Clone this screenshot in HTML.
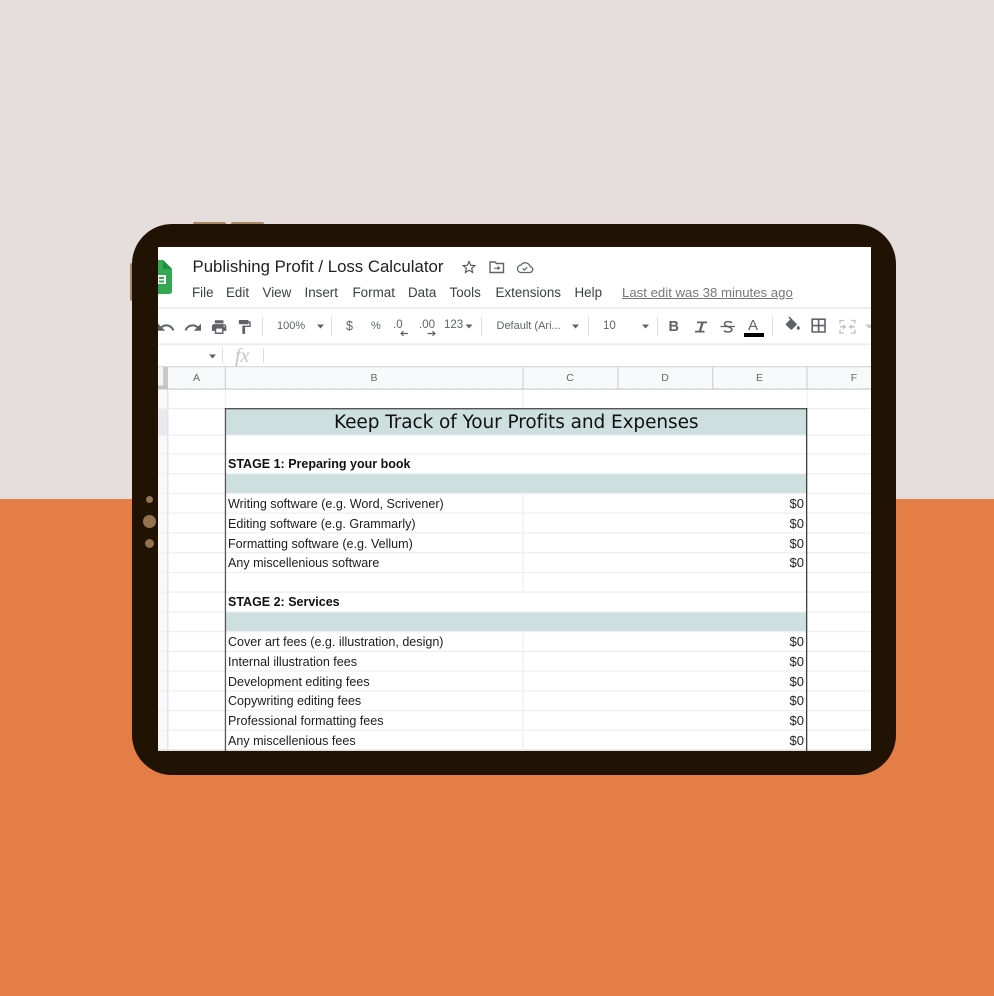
<!DOCTYPE html>
<html><head><meta charset="utf-8"><style>
html,body{margin:0;padding:0;width:994px;height:996px;overflow:hidden;background:#e6dedc}
*{box-sizing:border-box}
.a{position:absolute}
.t{position:absolute;white-space:nowrap;font-family:"Liberation Sans",sans-serif;line-height:1}
.m{font-size:13.4px;color:#3c4043;top:286px}
.tb{font-size:11px;color:#5f6368;top:321px}
.h{font-size:10.5px;color:#666;top:373px;text-align:center}
.c{font-size:12.55px;color:#1c1c1c;left:70px;margin-top:1px}
.b{font-weight:bold;color:#111;font-size:12.5px;margin-top:0}
.v{font-size:13px;color:#222;right:67px}
.sep{position:absolute;top:317px;width:1px;height:19px;background:#ddd}
</style></head><body>
<div class="a" style="left:0;top:499px;width:994px;height:497px;background:#e57d46"></div>
<div class="a" style="left:193px;top:222px;width:33px;height:4px;background:#a98868;border-radius:2px"></div>
<div class="a" style="left:231px;top:222px;width:33px;height:4px;background:#a98868;border-radius:2px"></div>
<div class="a" style="left:130px;top:263px;width:4px;height:38px;background:#a98868;border-radius:2px"></div>
<div class="a" style="left:132px;top:224px;width:764px;height:551px;background:#201303;border-radius:40px"></div>
<div class="a" style="left:145.5px;top:495.5px;width:7px;height:7px;border-radius:50%;background:#94724f"></div>
<div class="a" style="left:143px;top:514.5px;width:13px;height:13px;border-radius:50%;background:#94724f"></div>
<div class="a" style="left:145px;top:538.5px;width:9px;height:9px;border-radius:50%;background:#94724f"></div>

<div class="a" id="s" style="left:158px;top:247px;width:713px;height:504px;background:#fff;overflow:hidden;filter:blur(.35px)">
<div style="position:absolute;left:-158px;top:-247px;width:994px;height:996px">

<svg class="a" style="left:0;top:0" width="994" height="996" viewBox="0 0 994 996">
<!-- sheets logo -->
<path d="M158 260H163L172 269V291Q172 294 169 294H158Z" fill="#34a853"/><path d="M163 260L172 269H163Z" fill="#1e8e3e"/>
<path d="M158 275H166V284H158Z" fill="#fff"/><path d="M159 277H164V279H159ZM159 280.500H164V282.500H159Z" fill="#34a853"/>
<!-- title icons -->
<path transform="translate(460.400 258.500) scale(.72)" d="M22 9.240l-7.190-.62L12 2 9.190 8.630 2 9.240l5.460 4.730L5.820 21 12 17.270 18.180 21l-1.630-7.030L22 9.240zM12 15.400l-3.760 2.270 1-4.280-3.320-2.880 4.380-.38L12 6.100l1.710 4.040 4.380.38-3.320 2.880 1 4.280L12 15.400z" fill="#555"/>
<path d="M490 262H495L496.500 263.500H503.500V272.500H490Z" fill="none" stroke="#5f6368" stroke-width="1.400"/><path d="M494 267.700H497.500V265.700L500.500 268 497.500 270.300V268.700H494Z" fill="#5f6368"/>
<path d="M520.500 272.500H529.500A3 3 0 0 0 530 266.500 5 5 0 0 0 521 265 3.800 3.800 0 0 0 520.500 272.500Z" fill="none" stroke="#5f6368" stroke-width="1.300"/><path d="M522.700 268.500L524.300 270 527.200 267.200" fill="none" stroke="#5f6368" stroke-width="1.200"/>
<!-- toolbar rules -->
<rect x="158" y="307" width="713" height="2" fill="#eee"/>
<rect x="158" y="343.300" width="713" height="2" fill="#eee"/>
<!-- toolbar icons -->
<g fill="#5f6368">
<path transform="translate(156.400 318) scale(.8)" d="M12.500 8c-2.650 0-5.050.99-6.900 2.600L2 7v9h9l-3.620-3.620c1.390-1.160 3.160-1.880 5.120-1.880 3.540 0 6.550 2.310 7.600 5.500l2.370-.78C21.080 11.030 17.150 8 12.500 8z"/>
<path transform="translate(183.400 318) scale(.8)" d="M18.400 10.600C16.550 8.990 14.150 8 11.500 8c-4.650 0-8.580 3.030-9.960 7.220L3.900 16c1.050-3.190 4.050-5.500 7.600-5.500 1.950 0 3.730.72 5.120 1.880L13 16h9V7l-3.600 3.600z"/>
<path transform="translate(210.500 318) scale(.72 .76)" d="M19 8H5c-1.660 0-3 1.340-3 3v6h4v4h12v-4h4v-6c0-1.660-1.340-3-3-3zm-3 11H8v-5h8v5zm3-7c-.55 0-1-.45-1-1s.45-1 1-1 1 .45 1 1-.45 1-1 1zm-1-9H6v4h12V3z"/>
<path transform="translate(236 318.600) scale(.7)" d="M18 4V3c0-.55-.45-1-1-1H5c-.55 0-1 .45-1 1v4c0 .55.45 1 1 1h12c.55 0 1-.45 1-1V6h1v4H9v11c0 .55.45 1 1 1h2c.55 0 1-.45 1-1v-9h8V4h-3z"/>
<!-- carets -->
<path d="M317 324.500H324L320.500 328.500Z"/><path d="M465.500 324.500H472.500L469 328.500Z"/><path d="M572 324.500H579L575.500 328.500Z"/><path d="M642 324.500H649L645.500 328.500Z"/><path d="M209 354.500H216L212.500 358.500Z"/>
<!-- arrows on decimals -->
<path d="M408 333.500H401.500M403.500 331.200L401 333.500 403.500 335.800" stroke="#5f6368" stroke-width="1.200" fill="none"/>
<path d="M427.500 333.500H434.500M432.500 331.200L435 333.500 432.500 335.800" stroke="#5f6368" stroke-width="1.200" fill="none"/>
<!-- italic -->
<path d="M697 321.500H707V323.200H703.600L701.200 330.800H704.500V332.500H695V330.800H698.800L701.200 323.200H697Z"/>
<!-- fill + borders -->
<path transform="translate(783.500 316.500) scale(.78)" d="M16.560 8.940L7.620 0 6.210 1.410l2.380 2.380-5.150 5.150c-.59.59-.59 1.540 0 2.120l5.500 5.500c.29.29.68.44 1.060.44s.77-.15 1.060-.44l5.500-5.500c.59-.58.59-1.530 0-2.120zM19 11.500s-2 2.170-2 3.500c0 1.100.9 2 2 2s2-.9 2-2c0-1.330-2-3.500-2-3.500z"/>
<path transform="translate(809 316) scale(.8)" d="M3 3v18h18V3H3zm8 16H5v-6h6v6zm0-8H5V5h6v6zm8 8h-6v-6h6v6zm0-8h-6V5h6v6z"/>
</g>
<path d="M732 323C730.500 321 724.500 321 724.500 324 724.500 327 732 326.500 732 329.500 732 332.500 725.500 332.500 724 330.500" stroke="#5f6368" stroke-width="1.500" fill="none"/><path d="M720.500 326.500H735" stroke="#5f6368" stroke-width="1.300"/>
<rect x="744" y="333" width="20" height="4" fill="#000"/>
<path d="M840 323.500V320.500H844M851 320.500H855V323.500M840 329.500V333H844M851 333H855V329.500M840 326.800H845.500M849.500 326.800H855M843 325L845.500 326.800 843 328.600M852 325L849.500 326.800 852 328.600" fill="none" stroke="#bdc1c6" stroke-width="1.300"/>
<path d="M865 324.500H871V328H868.500Z" fill="#c4c7ca"/>
<!-- column header -->
<rect x="158" y="366" width="713" height="23" fill="#f8f9fa"/>
<rect x="158" y="366" width="713" height="1.300" fill="#dcdcdc"/>
<rect x="158" y="388.400" width="713" height="1.400" fill="#d2d2d2"/>
<rect x="163" y="367" width="5" height="22" fill="#c8c8c8"/><rect x="158" y="385.500" width="10" height="3.500" fill="#c4c4c4"/><rect x="158" y="367" width="5" height="18.500" fill="#f4f4f4"/>
<g fill="#d2d2d2"><rect x="224.800" y="367" width="1.200" height="22"/><rect x="522.400" y="367" width="1.200" height="22"/><rect x="617.300" y="367" width="1.200" height="22"/><rect x="712.100" y="367" width="1.200" height="22"/><rect x="806.400" y="367" width="1.200" height="22"/></g>
<!-- row header -->
<rect x="158" y="390" width="9" height="361" fill="#f8f9fa"/>
<rect x="158" y="409" width="9" height="26" fill="#e8eaed"/>
<rect x="167" y="390" width="1.500" height="361" fill="#e2e2e2"/>
<!-- fills -->
<rect x="225" y="408.500" width="581" height="26.500" fill="#cde0df"/>
<rect x="225" y="473.500" width="581" height="20" fill="#cde0df"/>
<rect x="225" y="611.500" width="581" height="20" fill="#cde0df"/>
<!-- gridlines -->
<g fill="#efefef">
<rect x="158" y="408" width="713" height="1.300"/><rect x="158" y="434.600" width="713" height="1.300"/><rect x="158" y="453.300" width="713" height="1.300"/><rect x="158" y="473" width="713" height="1.300"/><rect x="158" y="492.800" width="713" height="1.300"/><rect x="158" y="512.500" width="713" height="1.300"/><rect x="158" y="532.300" width="713" height="1.300"/><rect x="158" y="552.100" width="713" height="1.300"/><rect x="158" y="571.800" width="713" height="1.300"/><rect x="158" y="591.500" width="713" height="1.300"/><rect x="158" y="611.300" width="713" height="1.300"/><rect x="158" y="631" width="713" height="1.300"/><rect x="158" y="650.700" width="713" height="1.300"/><rect x="158" y="670.400" width="713" height="1.300"/><rect x="158" y="690.200" width="713" height="1.300"/><rect x="158" y="709.900" width="713" height="1.300"/><rect x="158" y="729.600" width="713" height="1.300"/><rect x="158" y="749.500" width="713" height="1.500" fill="#ddd"/>
<rect x="522.400" y="390" width="1.300" height="18"/><rect x="522.400" y="493" width="1.300" height="99"/><rect x="522.400" y="631" width="1.300" height="120"/><rect x="225" y="390" width="1.200" height="18"/>
<rect x="806.800" y="390" width="1" height="18"/>
</g>
<!-- table border -->
<g fill="#555"><rect x="224.800" y="408" width="582.500" height="1.400"/><rect x="224.800" y="408" width="1.300" height="343"/><rect x="806" y="408" width="1.300" height="343" fill="#3e3e3e"/></g>
</svg>

<div class="t" style="left:192.500px;top:259px;font-size:16.8px;color:#1f1f1f">Publishing Profit / Loss Calculator</div>

<div class="t m" style="left:192px">File</div>
<div class="t m" style="left:226px">Edit</div>
<div class="t m" style="left:262.500px">View</div>
<div class="t m" style="left:304.500px">Insert</div>
<div class="t m" style="left:352.500px">Format</div>
<div class="t m" style="left:408px">Data</div>
<div class="t m" style="left:449.500px">Tools</div>
<div class="t m" style="left:495.500px">Extensions</div>
<div class="t m" style="left:574.500px">Help</div>
<div class="t m" style="left:622px;font-size:13.200px;color:#777;text-decoration:underline">Last edit was 38 minutes ago</div>

<div class="sep" style="left:262px"></div>
<div class="t tb" style="left:277px;font-size:11px">100%</div>
<div class="sep" style="left:331px"></div>
<div class="t tb" style="left:346px;font-size:12.500px;top:320px">$</div>
<div class="t tb" style="left:371px;font-size:11px;top:320.500px">%</div>
<div class="t tb" style="left:393px;font-size:11.500px;top:320px">.0</div>
<div class="t tb" style="left:419px;font-size:11.500px;top:320px">.00</div>
<div class="t tb" style="left:444px;font-size:11.500px;top:320px">123</div>
<div class="sep" style="left:481px"></div>
<div class="t tb" style="left:496.500px">Default (Ari...</div>
<div class="sep" style="left:588px"></div>
<div class="t tb" style="left:603px;font-size:11.500px">10</div>
<div class="sep" style="left:657px"></div>
<div class="t" style="left:668.500px;top:320px;font-size:14.500px;font-weight:bold;color:#5f6368">B</div>
<div class="t" style="left:748px;top:318px;font-size:15px;color:#5f6368">A</div>
<div class="sep" style="left:772px"></div>

<div class="a" style="left:222px;top:347px;width:1px;height:16px;background:#ddd"></div>
<div class="t" style="left:235px;top:345px;font:italic 20px 'Liberation Serif',serif;color:#c4c4c4">fx</div>
<div class="a" style="left:263px;top:348px;width:1px;height:15px;background:#ddd"></div>

<div class="t h" style="left:168px;width:57px">A</div>
<div class="t h" style="left:225px;width:298px">B</div>
<div class="t h" style="left:523px;width:94px">C</div>
<div class="t h" style="left:618px;width:94px">D</div>
<div class="t h" style="left:713px;width:93px">E</div>
<div class="t h" style="left:807px;width:94px">F</div>

<div class="t" style="left:334px;top:413.500px;font-family:'DejaVu Sans',sans-serif;font-size:18.500px;color:#111;letter-spacing:-.08px">Keep Track of Your Profits and Expenses</div>

<div class="a" style="left:158px;top:0;width:713px;height:0">
<div class="t c b" style="top:457.500px">STAGE 1: Preparing your book</div>
<div class="t c" style="top:497px">Writing software (e.g. Word, Scrivener)</div>
<div class="t c" style="top:517px">Editing software (e.g. Grammarly)</div>
<div class="t c" style="top:536.500px">Formatting software (e.g. Vellum)</div>
<div class="t c" style="top:556px">Any miscellenious software</div>
<div class="t c b" style="top:595.500px">STAGE 2: Services</div>
<div class="t c" style="top:635px">Cover art fees (e.g. illustration, design)</div>
<div class="t c" style="top:654.500px">Internal illustration fees</div>
<div class="t c" style="top:674.500px">Development editing fees</div>
<div class="t c" style="top:694px">Copywriting editing fees</div>
<div class="t c" style="top:713.500px">Professional formatting fees</div>
<div class="t c" style="top:733.500px">Any miscellenious fees</div>
<div class="t v" style="top:497px">$0</div><div class="t v" style="top:517px">$0</div><div class="t v" style="top:536.500px">$0</div><div class="t v" style="top:556px">$0</div>
<div class="t v" style="top:635px">$0</div><div class="t v" style="top:654.500px">$0</div><div class="t v" style="top:674.500px">$0</div><div class="t v" style="top:694px">$0</div><div class="t v" style="top:713.500px">$0</div><div class="t v" style="top:733.500px">$0</div>
</div>

</div></div>
</body></html>
